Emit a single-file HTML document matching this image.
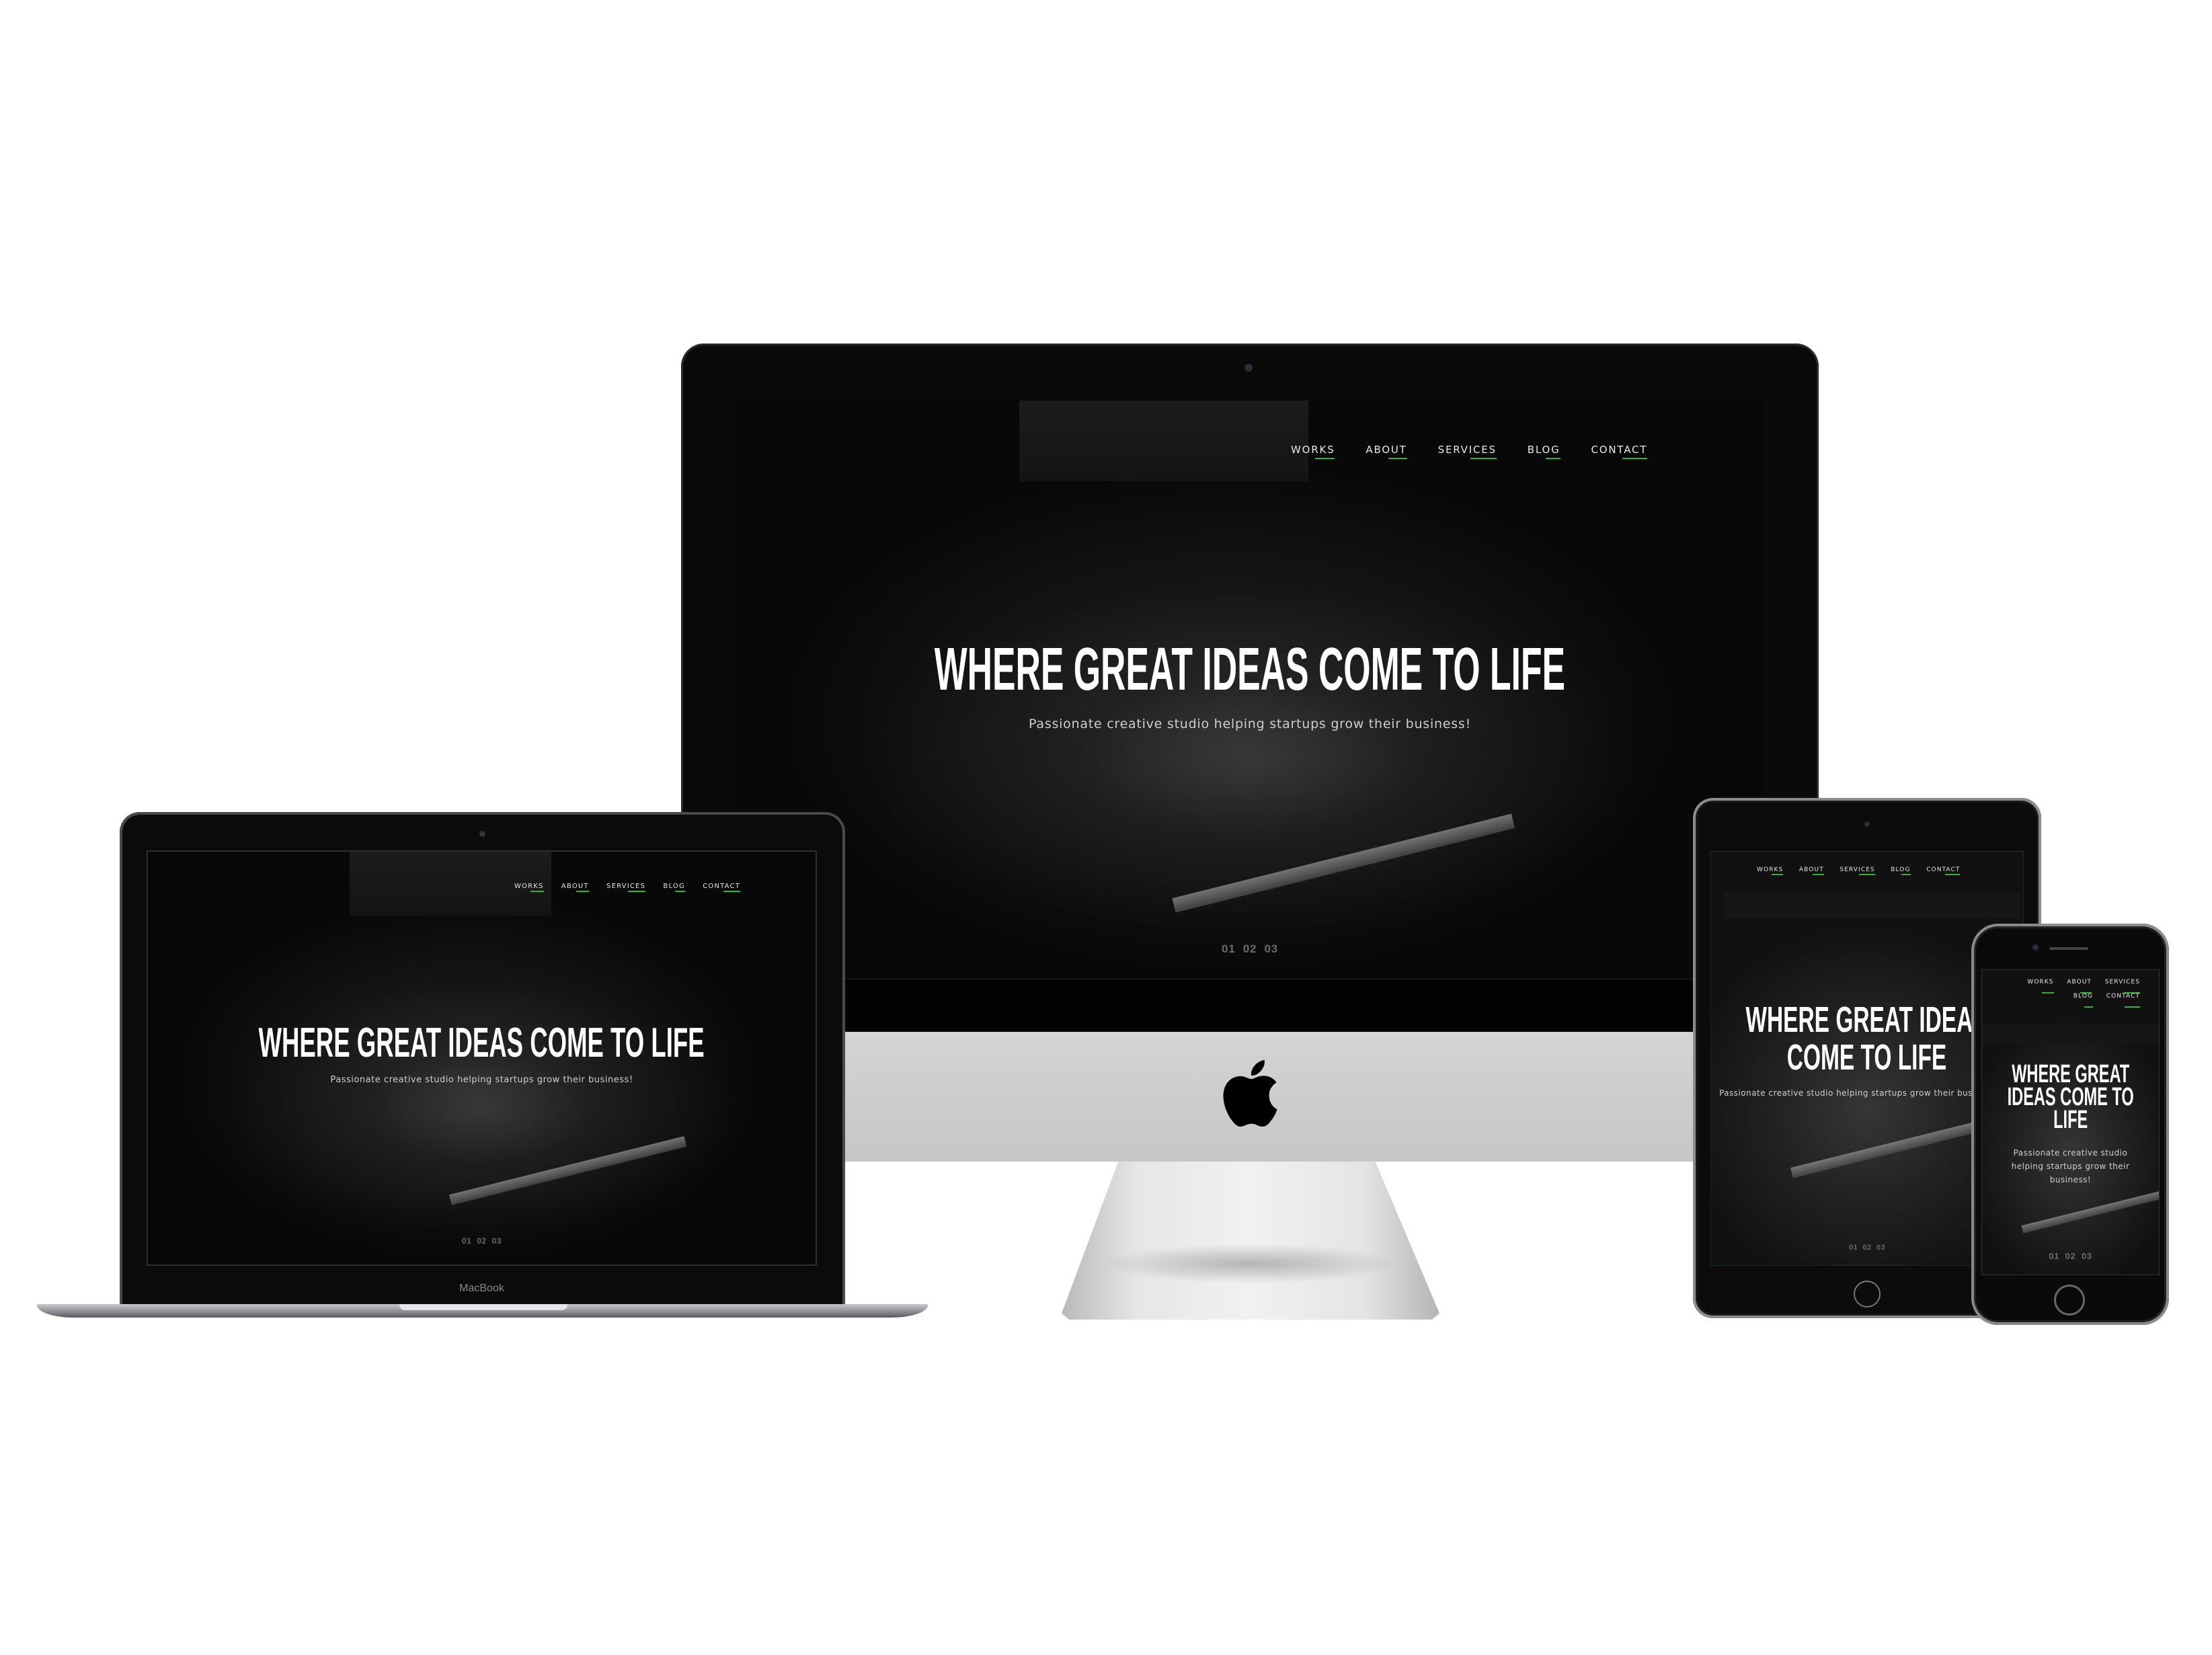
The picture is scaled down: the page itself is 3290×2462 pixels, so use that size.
<!DOCTYPE html>
<html><head><meta charset="utf-8">
<style>
*{margin:0;padding:0;box-sizing:border-box}
html,body{width:3290px;height:2462px;background:#fff;overflow:hidden;position:relative;font-family:"Liberation Sans",sans-serif}
.a{position:absolute}
.scr{position:absolute;overflow:hidden;background:#060606}
.photo{position:absolute;inset:0;background:
 radial-gradient(ellipse 38% 30% at 50% 62%, rgba(80,80,80,.5) 0%, rgba(45,45,45,.3) 45%, rgba(0,0,0,0) 100%),
 radial-gradient(ellipse 55% 55% at 48% 55%, #242424 0%, #141414 45%, #080808 80%)}
.win{position:absolute;background:linear-gradient(#1c1c1c,#141414)}
.rul{position:absolute;background:linear-gradient(#8a8a8a,#4a4a4a);transform:rotate(-14deg);transform-origin:left center;opacity:.8}
.h{position:absolute;left:-100%;right:-100%;text-align:center;color:#fff;font-family:"Liberation Sans Narrow","Liberation Sans",sans-serif;font-weight:bold;white-space:nowrap}
.h span{display:inline-block}
.s{position:absolute;left:0;right:0;text-align:center;color:#cfcfcf;font-family:"DejaVu Sans",sans-serif;white-space:nowrap;letter-spacing:.04em}
.nav{position:absolute;color:#e8e8e8;font-family:"DejaVu Sans",sans-serif;letter-spacing:.12em;white-space:nowrap}
.nav b{font-weight:normal;position:relative;display:inline-block}
.nav b:after{content:"";position:absolute;right:0;bottom:-30%;width:45%;height:12%;min-height:2px;background:#2fb52f}
.dots{position:absolute;left:0;right:0;text-align:center;color:#6a6a6a;font-family:"Liberation Sans Narrow",sans-serif;font-weight:bold;white-space:nowrap}
</style></head><body>

<!-- iMAC -->
<div class="a" style="left:1013px;top:511px;width:1692px;height:1024px;background:#0a0a0a;border-radius:34px 34px 0 0;box-shadow:inset 0 0 0 3px #2a2a2a"></div>
<div class="a" style="left:1851px;top:541px;width:12px;height:12px;border-radius:50%;background:#2b2d3a"></div>
<div class="a" style="left:1013px;top:1535px;width:1692px;height:193px;background:linear-gradient(#d4d4d4,#c6c6c6)"></div>
<svg class="a" style="left:1814px;top:1574px" width="90" height="104" viewBox="0 0 170 200"><path fill="#000" d="M140 106c0-24 20-35 21-36-11-17-29-19-35-19-15-2-29 9-37 9s-19-9-32-8c-16 0-31 9-40 24-17 29-4 72 12 96 8 11 17 24 30 24 12-1 17-8 31-8s18 8 31 8 21-12 29-23c9-13 13-26 13-27-1 0-23-9-23-40zM117 36c7-8 11-19 10-30-10 0-21 7-28 15-6 7-12 18-10 29 11 1 21-6 28-14z"/></svg>
<div class="a" style="left:1579px;top:1728px;width:562px;height:235px;background:linear-gradient(90deg,#b9b9b9,#e6e6e6 20%,#f1f1f1 50%,#e4e4e4 80%,#b5b5b5);clip-path:polygon(15% 0,83% 0,100% 96%,98% 100%,2% 100%,0 96%)"></div>
<div class="a" style="left:1640px;top:1850px;width:440px;height:60px;background:radial-gradient(ellipse at 50% 50%,rgba(0,0,0,.25),rgba(0,0,0,0) 70%)"></div>
<div class="scr" style="left:1096px;top:596px;width:1526px;height:860px">
  <div class="photo"></div>
  <div class="win" style="left:420px;top:0;width:430px;height:120px"></div>
  <div class="rul" style="left:650px;top:740px;width:520px;height:22px"></div>
  <div class="nav" style="left:824px;top:64px;font-size:15px"><b>WORKS</b>&nbsp;&nbsp;&nbsp;&nbsp;&nbsp;&nbsp;&nbsp;<b>ABOUT</b>&nbsp;&nbsp;&nbsp;&nbsp;&nbsp;&nbsp;&nbsp;<b>SERVICES</b>&nbsp;&nbsp;&nbsp;&nbsp;&nbsp;&nbsp;&nbsp;<b>BLOG</b>&nbsp;&nbsp;&nbsp;&nbsp;&nbsp;&nbsp;&nbsp;<b>CONTACT</b></div>
  <div class="h" style="top:350px;font-size:90px;line-height:100px"><span style="transform:scaleX(.575)">WHERE GREAT IDEAS COME TO LIFE</span></div>
  <div class="s" style="top:470px;font-size:19px">Passionate creative studio helping startups grow their business!</div>
  <div class="dots" style="top:806px;font-size:17px;letter-spacing:.05em">01&nbsp;&nbsp;02&nbsp;&nbsp;03</div>
</div>
<div class="a" style="left:1096px;top:1456px;width:1526px;height:79px;background:#030303;border-top:1px solid #222"></div>

<!-- MACBOOK -->
<div class="a" style="left:178px;top:1208px;width:1079px;height:736px;background:#0b0b0b;border-radius:30px 30px 0 0;box-shadow:inset 0 0 0 4px #4a4a4a"></div>
<div class="a" style="left:713px;top:1236px;width:9px;height:9px;border-radius:50%;background:#333"></div>
<div class="scr" style="left:218px;top:1265px;width:997px;height:618px;border:2px solid #2e2e2e">
  <div class="photo"></div>
  <div class="win" style="left:300px;top:0;width:300px;height:95px"></div>
  <div class="rul" style="left:450px;top:510px;width:360px;height:16px"></div>
  <div class="nav" style="left:545px;top:46px;font-size:10px"><b>WORKS</b>&nbsp;&nbsp;&nbsp;&nbsp;&nbsp;&nbsp;<b>ABOUT</b>&nbsp;&nbsp;&nbsp;&nbsp;&nbsp;&nbsp;<b>SERVICES</b>&nbsp;&nbsp;&nbsp;&nbsp;&nbsp;&nbsp;<b>BLOG</b>&nbsp;&nbsp;&nbsp;&nbsp;&nbsp;&nbsp;<b>CONTACT</b></div>
  <div class="h" style="top:250px;font-size:62px;line-height:70px"><span style="transform:scaleX(.59)">WHERE GREAT IDEAS COME TO LIFE</span></div>
  <div class="s" style="top:332px;font-size:13px">Passionate creative studio helping startups grow their business!</div>
  <div class="dots" style="top:572px;font-size:12px;letter-spacing:.05em">01&nbsp;&nbsp;02&nbsp;&nbsp;03</div>
</div>
<div class="a" style="left:218px;top:1895px;width:997px;height:44px;text-align:center;color:#8a8a8a;font-size:16px;line-height:44px;font-family:'Liberation Sans Narrow',sans-serif">MacBook</div>
<div class="a" style="left:55px;top:1940px;width:1325px;height:20px;background:linear-gradient(#c8c8cc,#8a8a90 60%,#55555a);border-radius:2px 2px 60px 60px/2px 2px 20px 20px"></div>
<div class="a" style="left:594px;top:1940px;width:250px;height:9px;background:#e6e6ea;border-radius:0 0 8px 8px"></div>

<!-- iPAD -->
<div class="a" style="left:2518px;top:1187px;width:518px;height:774px;background:#0c0c0c;border-radius:30px;box-shadow:inset 0 0 0 4px #8d8d8d,inset 0 0 0 7px #1a1a1a"></div>
<div class="a" style="left:2773px;top:1222px;width:8px;height:8px;border-radius:50%;background:#2b2b33"></div>
<div class="scr" style="left:2544px;top:1266px;width:466px;height:617px;border:1px solid #1e2a24">
  <div class="photo" style="background:radial-gradient(ellipse 60% 45% at 50% 62%, #363636 0%, #222 50%, #111 100%)"></div>
  <div class="win" style="left:20px;top:60px;width:440px;height:40px;background:#161616"></div>
  <div class="rul" style="left:120px;top:470px;width:320px;height:16px"></div>
  <div class="nav" style="left:68px;top:22px;font-size:9px"><b>WORKS</b>&nbsp;&nbsp;&nbsp;&nbsp;&nbsp;&nbsp;<b>ABOUT</b>&nbsp;&nbsp;&nbsp;&nbsp;&nbsp;&nbsp;<b>SERVICES</b>&nbsp;&nbsp;&nbsp;&nbsp;&nbsp;&nbsp;<b>BLOG</b>&nbsp;&nbsp;&nbsp;&nbsp;&nbsp;&nbsp;<b>CONTACT</b></div>
  <div class="h" style="top:222px;font-size:54px;line-height:56px"><span style="transform:scaleX(.62)">WHERE GREAT IDEAS<br>COME TO LIFE</span></div>
  <div class="s" style="top:352px;font-size:12px;left:12px;right:auto;text-align:left">Passionate creative studio helping startups grow their business!</div>
  <div class="dots" style="top:583px;font-size:11px;letter-spacing:.05em">01&nbsp;&nbsp;02&nbsp;&nbsp;03</div>
</div>
<div class="a" style="left:2757px;top:1905px;width:40px;height:40px;border-radius:50%;border:2px solid #777"></div>

<!-- iPHONE -->
<div class="a" style="left:2932px;top:1374px;width:294px;height:597px;background:#0a0a0a;border-radius:40px;box-shadow:inset 0 0 0 4px #8a8a8a,inset 0 0 0 7px #222"></div>
<div class="a" style="left:3048px;top:1409px;width:58px;height:4px;border-radius:2px;background:#444"></div>
<div class="a" style="left:3023px;top:1405px;width:9px;height:9px;border-radius:50%;background:#2b2d3a"></div>
<div class="scr" style="left:2947px;top:1442px;width:265px;height:455px;border:1px solid #333">
  <div class="photo" style="background:radial-gradient(ellipse 60% 45% at 50% 60%, #363636 0%, #222 50%, #111 100%)"></div>
  <div class="win" style="left:0;top:80px;width:265px;height:30px;background:#161616"></div>
  <div class="rul" style="left:60px;top:380px;width:230px;height:12px"></div>
  <div class="nav" style="left:0;right:28px;top:8px;font-size:9px;text-align:right;line-height:21px"><b>WORKS</b>&nbsp;&nbsp;&nbsp;&nbsp;&nbsp;<b>ABOUT</b>&nbsp;&nbsp;&nbsp;&nbsp;&nbsp;<b>SERVICES</b><br><b>BLOG</b>&nbsp;&nbsp;&nbsp;&nbsp;&nbsp;<b>CONTACT</b></div>
  <div class="h" style="top:138px;font-size:38px;line-height:34px"><span style="transform:scaleX(.62)">WHERE GREAT<br>IDEAS COME TO<br>LIFE</span></div>
  <div class="s" style="top:262px;font-size:12px;line-height:20px;white-space:normal;padding:0 28px">Passionate creative studio helping startups grow their business!</div>
  <div class="dots" style="top:418px;font-size:13px;letter-spacing:.05em">01&nbsp;&nbsp;02&nbsp;&nbsp;03</div>
</div>
<div class="a" style="left:3055px;top:1911px;width:46px;height:46px;border-radius:50%;border:3px solid #666"></div>

</body></html>
